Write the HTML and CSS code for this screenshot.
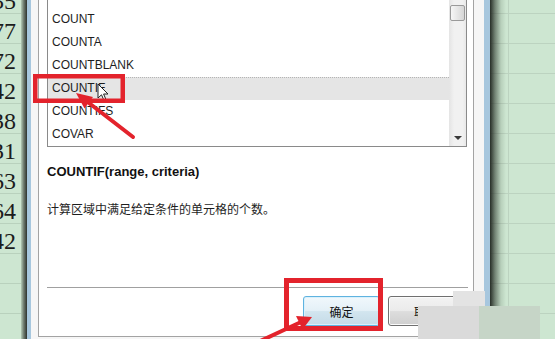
FILE: index.html
```html
<!DOCTYPE html>
<html lang="zh-CN">
<head>
<meta charset="utf-8">
<title>插入函数</title>
<link rel="stylesheet" href="styles.css">
</head>
<body>
<div class="screen">
  <div class="sheet-left">
    <div class="cells">
      <div class="cell">35</div>
      <div class="cell">77</div>
      <div class="cell">72</div>
      <div class="cell">42</div>
      <div class="cell">38</div>
      <div class="cell">31</div>
      <div class="cell">63</div>
      <div class="cell">64</div>
      <div class="cell">42</div>
      <div class="cell"></div>
      <div class="cell"></div>
      <div class="cell"></div>
    </div>
    <div class="shade"></div>
  </div>

  <div class="dialog">
    <div class="panel">
      <div class="listbox">
        <ul class="items">
          <li>CORREL</li>
          <li>COUNT</li>
          <li>COUNTA</li>
          <li>COUNTBLANK</li>
          <li class="selected">COUNTIF</li>
          <li>COUNTIFS</li>
          <li>COVAR</li>
        </ul>
        <div class="scrollbar">
          <div class="sb-btn"></div>
          <div class="sb-track"><div class="sb-thumb"></div></div>
          <div class="sb-btn down"><span class="tri"></span></div>
        </div>
      </div>
      <div class="desc">
        <p class="sig">COUNTIF(range, criteria)</p>
        <p class="help">计算区域中满足给定条件的单元格的个数。</p>
      </div>
      <div class="sep"></div>
      <div class="buttons">
        <button class="btn primary">确定</button>
        <button class="btn">取消</button>
      </div>
    </div>
  </div>

  <div class="sheet-right"></div>

  <svg class="annot" width="555" height="339" viewBox="0 0 555 339">
    <g class="cursor">
      <path d="M98 84 L98 98 L101.5 94.8 L104 100.5 L106 99.6 L103.6 94 L108 94 Z" fill="#ffffff" stroke="#222" stroke-width="1"/>
    </g>
    <rect x="35.25" y="76.25" width="87.5" height="24.5" fill="none" stroke="#e3232c" stroke-width="4.5"/>
    <line x1="133" y1="137" x2="89" y2="103" stroke="#e3232c" stroke-width="4" stroke-linecap="round"/>
    <polygon points="76,93 93,97 84.5,108.5" fill="#e3232c"/>
    <rect x="286.5" y="280.5" width="94" height="48" fill="none" stroke="#e3232c" stroke-width="5"/>
    <line x1="256" y1="343" x2="300" y2="322.5" stroke="#e3232c" stroke-width="4" stroke-linecap="round"/>
    <polygon points="312,317 302.5,329.5 296,316" fill="#e3232c"/>
  </svg>

  <div class="wm wm-a"></div>
  <div class="wm wm-b"></div>
  <div class="wm wm-c"></div>
</div>
</body>
</html>
```

FILE: styles.css
```css
* { box-sizing: border-box; }
html, body { margin: 0; padding: 0; }
body {
  width: 555px;
  height: 339px;
  overflow: hidden;
  background: #cde6d1;
  font-family: "Liberation Sans", "Noto Sans CJK SC", sans-serif;
}
.screen {
  position: relative;
  width: 555px;
  height: 339px;
  display: flex;
  overflow: hidden;
}

/* spreadsheet strips */
.sheet-left {
  width: 27px;
  flex: none;
  display: flex;
  background: #cde6d1;
  overflow: hidden;
}
.cells {
  width: 21px;
  flex: none;
  margin-top: -16px;
  overflow: hidden;
}
.cell {
  height: 30px;
  border-bottom: 1px solid #b9d1bd;
  display: flex;
  justify-content: flex-end;
  padding-right: 5px;
  overflow: hidden;
  white-space: nowrap;
  font-family: "Liberation Serif", serif;
  font-size: 24px;
  line-height: 34px;
  color: #1c1c1c;
}
.shade {
  flex: 1;
  background: linear-gradient(to right, #b4cbb7, #6f7c70 45%, #2e332e);
}
.sheet-right {
  flex: 1;
  background:
    linear-gradient(to right, rgba(30,36,30,.95), rgba(40,50,40,.55) 5px, rgba(60,80,60,.15) 11px, rgba(0,0,0,0) 16px),
    linear-gradient(to right, rgba(0,0,0,0) 18px, #bcd3c0 18px, #bcd3c0 19px, rgba(0,0,0,0) 19px),
    repeating-linear-gradient(to bottom, rgba(0,0,0,0) 0, rgba(0,0,0,0) 13px, #bcd3c0 13px, #bcd3c0 14px, rgba(0,0,0,0) 14px, rgba(0,0,0,0) 30px),
    #cde6d1;
}

/* dialog */
.dialog {
  width: 463px;
  flex: none;
  height: 339px;
  display: flex;
  flex-direction: column;
  background: #f6f6f6;
  border-left: 4px solid #a7c7de;
  border-right: 6px solid #a7c7de;
}
.panel {
  flex: 1;
  margin: -24px 10px 2px 7px;
  border: 1px solid #a3a3a3;
  background: #ffffff;
  display: flex;
  flex-direction: column;
  padding-top: 7px;
}
.listbox {
  height: 163px;
  margin: 0 6px 0 8px;
  border: 1px solid #8a8a8a;
  display: flex;
  flex: none;
}
.items {
  list-style: none;
  margin: 0;
  padding: 0;
  flex: 1;
}
.items li {
  height: 23px;
  line-height: 23px;
  padding-left: 4px;
  font-size: 12px;
  color: #1e1e1e;
  white-space: nowrap;
}
.items li.selected {
  background: #e5e5e5;
  border-top: 1px dotted #b5b5b5;
  line-height: 21px;
}
.scrollbar {
  width: 17px;
  flex: none;
  display: flex;
  flex-direction: column;
  background: linear-gradient(to right, #e4e4e4, #f1f1f1 30%, #f1f1f1 80%, #e8e8e8);
}
.sb-btn {
  height: 17px;
  flex: none;
  display: flex;
  align-items: center;
  justify-content: center;
}
.sb-track {
  flex: 1;
  padding: 3px 1px 0 1px;
}
.sb-thumb {
  height: 16px;
  border: 1px solid #9a9a9a;
  border-radius: 2px;
  background: linear-gradient(to right, #f6f6f6, #e6e6e6 50%, #d6d6d6);
}
.tri {
  width: 0;
  height: 0;
  border-left: 4px solid transparent;
  border-right: 4px solid transparent;
  border-top: 4px solid #3a3a3a;
  margin-top: 1px;
}

.desc {
  flex: 1;
  padding-left: 8px;
}
.sig {
  margin: 17px 0 0 0;
  font-size: 13px;
  line-height: 16px;
  font-weight: bold;
  color: #111;
}
.help {
  margin: 22px 0 0 0;
  font-size: 12px;
  line-height: 16px;
  color: #1e1e1e;
}
.sep {
  height: 1px;
  flex: none;
  margin: 0 5px 0 8px;
  background: #a0a0a0;
}
.buttons {
  flex: none;
  display: flex;
  justify-content: flex-end;
  gap: 8px;
  padding: 8px 8px 10px 0;
}
.btn {
  width: 77px;
  height: 30px;
  border: 1px solid #707070;
  border-radius: 3px;
  background: linear-gradient(to bottom, #f3f3f3, #ebebeb 48%, #dddddd 52%, #cfcfcf);
  box-shadow: inset 0 0 0 1px #fbfbfb;
  font-family: "Noto Sans CJK SC", sans-serif;
  font-size: 12px;
  color: #111;
  padding: 0;
  text-indent: -50px;
  text-align: left;
  padding-left: 75px;
}
.btn.primary {
  border-color: #5fb3e0;
  background: linear-gradient(to bottom, #f1f8fc, #e4f0f7 48%, #d2e5ef 52%, #c5dbe7);
  box-shadow: inset 0 0 0 1px #d9f0fb;
  text-align: center;
  text-indent: 0;
  padding-left: 0;
}

/* overlays */
.annot {
  position: absolute;
  left: 0;
  top: 0;
  pointer-events: none;
}
.wm {
  position: absolute;
}
.wm-a { left: 453px; top: 291px; width: 32px; height: 21px; background: #e3e3e3; }
.wm-b { left: 418px; top: 306px; width: 61px; height: 33px; background: #dadada; }
.wm-c { left: 479px; top: 306px; width: 61px; height: 33px; background: #c6d5c7; }
```
